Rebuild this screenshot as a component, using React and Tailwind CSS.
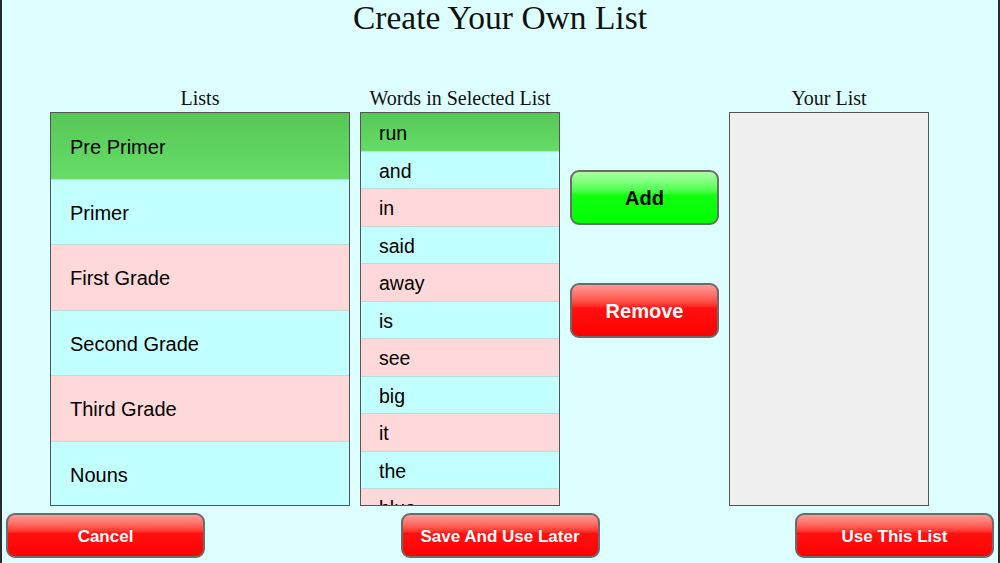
import React from 'react';

const lists = ['Pre Primer', 'Primer', 'First Grade', 'Second Grade', 'Third Grade', 'Nouns'];
const words = ['run', 'and', 'in', 'said', 'away', 'is', 'see', 'big', 'it', 'the', 'blue'];

const rowBg = (i) => {
  if (i === 0) return 'bg-gradient-to-b from-[#58c758] to-[#66dd66]';
  return i % 2 === 1 ? 'bg-[#c2ffff]' : 'bg-[#ffd9d9]';
};

const RedButton = ({ children, className = '' }) => (
  <button
    className={`rounded-[9px] border-2 border-[#6b6b6b] bg-gradient-to-b from-[#ff9a9a] via-[#ff1010] via-45% to-[#ff0000] text-white font-bold font-['Liberation_Sans',Arial,sans-serif] ${className}`}
  >
    {children}
  </button>
);

const App = () => {
  return (
    <div className="w-[1000px] h-[563px] overflow-hidden bg-[#ddffff] border-x-2 border-[#2b2b2b] flex flex-col font-['Liberation_Serif','Times_New_Roman',serif] text-[#111]">
      {/* Title */}
      <h1 className="text-center text-[33.5px] leading-none pt-[1px] h-[80px]">Create Your Own List</h1>

      <div className="flex pl-[48px] gap-[10px]">
        {/* Lists */}
        <div className="w-[300px] flex flex-col">
          <div className="text-center text-[20px] leading-[36px] h-[32px]">Lists</div>
          <div className="h-[394px] border border-[#555] overflow-hidden flex flex-col font-['Liberation_Sans',Arial,sans-serif]">
            {lists.map((name, i) => (
              <div
                key={name}
                className={`h-[65.5px] shrink-0 flex items-center pl-[19px] pt-[2px] text-[20px] text-black ${rowBg(i)} ${i > 0 ? 'border-t border-[#c4dada]' : ''}`}
              >
                {name}
              </div>
            ))}
          </div>
        </div>

        {/* Words */}
        <div className="w-[200px] flex flex-col">
          <div className="text-center text-[20px] leading-[36px] h-[32px] whitespace-nowrap">Words in Selected List</div>
          <div className="h-[394px] border border-[#555] overflow-hidden flex flex-col font-['Liberation_Sans',Arial,sans-serif]">
            {words.map((w, i) => (
              <div
                key={w}
                className={`h-[37.5px] shrink-0 flex items-center pl-[18px] pt-[3px] text-[19.5px] text-black ${rowBg(i)} ${i > 0 ? 'border-t border-[#c4dada]' : ''}`}
              >
                {w}
              </div>
            ))}
          </div>
        </div>

        {/* Add / Remove */}
        <div className="w-[149px] flex flex-col pt-[90px] gap-[58px] font-['Liberation_Sans',Arial,sans-serif]">
          <button className="h-[55px] pt-[1px] rounded-[9px] border-2 border-[#6b6b6b] bg-gradient-to-b from-[#a6ffa6] via-[#10ff10] via-45% to-[#00ff00] text-black font-bold text-[20px]">
            Add
          </button>
          <button className="h-[55px] pt-[1px] rounded-[9px] border-2 border-[#6b6b6b] bg-gradient-to-b from-[#ff9a9a] via-[#ff1010] via-45% to-[#ff0000] text-white font-bold text-[20px]">
            Remove
          </button>
        </div>

        {/* Your List */}
        <div className="w-[200px] flex flex-col">
          <div className="text-center text-[20px] leading-[36px] h-[32px]">Your List</div>
          <div className="h-[394px] border border-[#555] bg-[#f0f0f0]"></div>
        </div>
      </div>

      {/* Bottom buttons */}
      <div className="flex justify-between px-[4px] pt-[7px]">
        <RedButton className="w-[199px] h-[45px] pt-[2px] text-[17px]">Cancel</RedButton>
        <RedButton className="w-[199px] h-[45px] pt-[2px] text-[17px]">Save And Use Later</RedButton>
        <RedButton className="w-[199px] h-[45px] pt-[2px] text-[17px]">Use This List</RedButton>
      </div>
    </div>
  );
};

export default App;
